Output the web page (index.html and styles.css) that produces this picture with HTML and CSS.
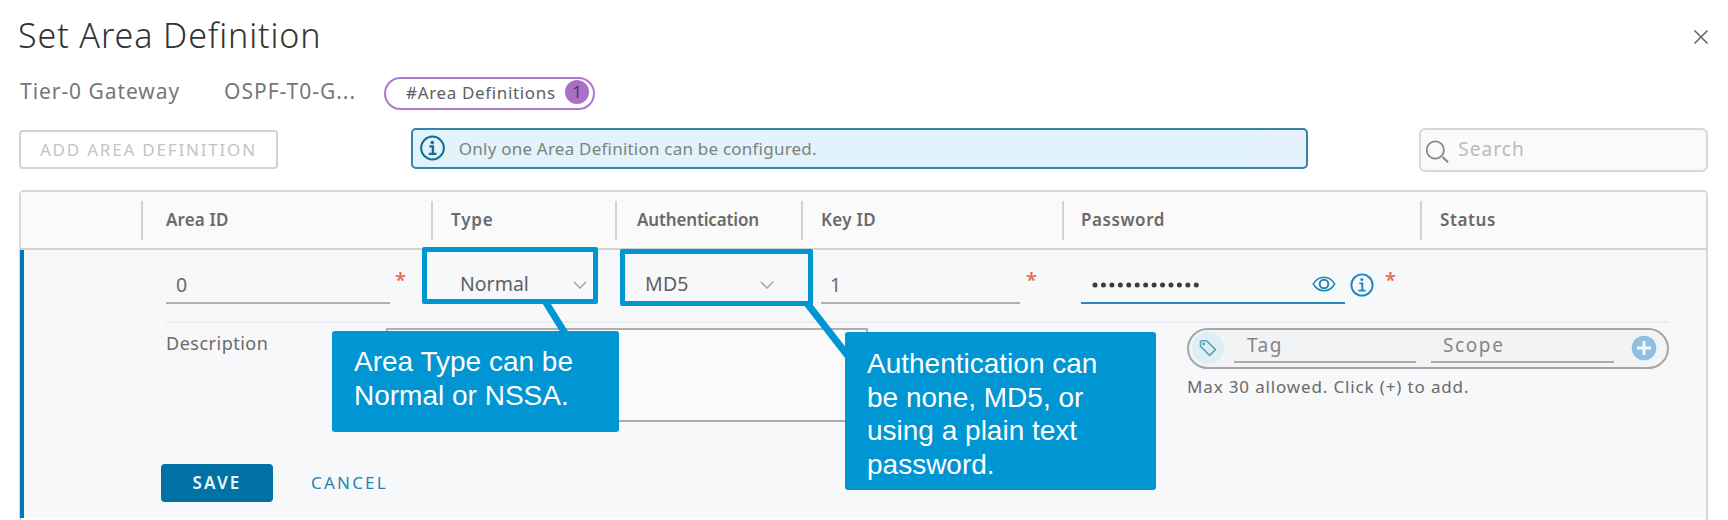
FILE: index.html
```
<!DOCTYPE html>
<html lang="en">
<head>
<meta charset="utf-8">
<title>Set Area Definition</title>
<link rel="stylesheet" href="styles.css">
</head>
<body>
<main class="dialog">
  <header class="dialog-head">
    <h1 class="title">Set Area Definition</h1>
    <svg class="close" viewBox="0 0 16 16" width="16" height="16"><path d="M1.5 1.5l13 13M14.5 1.5l-13 13" stroke="#666" stroke-width="1.6" fill="none"/></svg>
  </header>

  <div class="crumbs">
    <span class="crumb crumb-type">Tier-0 Gateway</span>
    <span class="crumb crumb-name">OSPF-T0-G...</span>
    <span class="pill"><span class="pill-text">#Area Definitions</span><span class="badge">1</span></span>
  </div>

  <div class="toolbar">
    <button class="btn btn-add">ADD AREA DEFINITION</button>
    <div class="alert">
      <svg class="alert-icon" viewBox="0 0 26 26" width="26" height="26" fill="none" stroke="#17708f"><circle cx="12.500" cy="13" r="11.400" stroke-width="2"/><circle cx="12.300" cy="7.600" r="1.800" fill="#17708f" stroke="none"/><path d="M9.300 11.400h3.600v7.400M8.700 18.900h7.800" stroke-width="2.400"/></svg>
      <span class="alert-text">Only one Area Definition can be configured.</span>
    </div>
    <div class="search">
      <svg class="search-icon" viewBox="0 0 24 24" width="24" height="24" fill="none" stroke="#858585"><circle cx="10.3" cy="10" r="8.6" stroke-width="1.7"/><path d="M17.6 17l5.4 5.2" stroke-width="2"/></svg>
      <span class="search-text">Search</span>
    </div>
  </div>

  <section class="table">
    <div class="cols table-head">
      <span class="th th-empty"></span>
      <span class="th th-area">Area ID</span>
      <span class="th th-type">Type</span>
      <span class="th th-auth">Authentication</span>
      <span class="th th-key">Key ID</span>
      <span class="th th-pass">Password</span>
      <span class="th th-status">Status</span>
    </div>
    <div class="edit">
      <div class="cols fields">
        <div></div>
        <div class="cell cell-area"><span class="input input-area">0</span><span class="star">*</span></div>
        <div class="cell cell-type"><span class="select-text">Normal</span><svg class="chev" viewBox="0 0 14 8" width="14" height="8"><path d="M.8.8L7 7 13.200.8" fill="none" stroke="#aaa" stroke-width="1.6"/></svg></div>
        <div class="cell cell-auth"><span class="select-text">MD5</span><svg class="chev" viewBox="0 0 14 8" width="14" height="8"><path d="M.8.8L7 7 13.200.8" fill="none" stroke="#aaa" stroke-width="1.6"/></svg></div>
        <div class="cell cell-key"><span class="input input-key">1</span><span class="star">*</span></div>
        <div class="cell cell-pass">
          <span class="input input-pass">
            <svg class="dots" viewBox="0 0 108 6" width="108" height="6"><path d="M3 3H106" stroke="#3c3c3c" stroke-width="5" stroke-linecap="round" stroke-dasharray="0 8.44" fill="none"/></svg>
            <svg class="eye" viewBox="0 0 24 16" width="24" height="16" fill="none" stroke="#2487b5" stroke-width="1.5"><path d="M1.300 8C4 3.400 7.700 1.200 12 1.200S20 3.400 22.700 8C20 12.600 16.300 14.800 12 14.800S4 12.600 1.300 8z"/><circle cx="12" cy="8" r="4.300" stroke-width="2"/></svg>
          </span>
          <svg class="info" viewBox="0 0 24 24" width="24" height="24" fill="none" stroke="#1f86c4"><circle cx="12" cy="12" r="10.600" stroke-width="1.900"/><circle cx="11.800" cy="6.500" r="1.500" fill="#1f86c4" stroke="none"/><path d="M9.300 10.400h3v7M8.300 17.600h7.400" stroke-width="1.900"/></svg>
          <span class="star">*</span>
        </div>
      </div>
      <div class="details">
        <span class="desc-label">Description</span>
        <div class="textarea"></div>
        <div class="tags">
          <div class="tag-box">
            <span class="tag-icon"><svg viewBox="0 0 18 18" width="18" height="18" fill="none" stroke="#5d9db8" stroke-width="1.500"><path d="M1.500 2.600V7.200L10.700 16.400 16.500 10.600 7.600 1.700H2.500z" stroke-linejoin="round"/><circle cx="4.700" cy="4.900" r=".700"/></svg></span>
            <span class="tag-input tag-name">Tag</span>
            <span class="tag-input tag-scope">Scope</span>
            <svg class="plus" viewBox="0 0 26 26" width="26" height="26"><circle cx="13" cy="13" r="12.300" fill="#90bfe2"/><path d="M13 6v14M6 13h14" stroke="#f4f8fb" stroke-width="3"/></svg>
          </div>
          <div class="hint">Max 30 allowed. Click (+) to add.</div>
        </div>
      </div>
      <div class="actions">
        <button class="btn btn-save">SAVE</button>
        <span class="cancel">CANCEL</span>
      </div>
    </div>
  </section>

  <svg class="leaders" viewBox="0 0 1728 520" width="1728" height="520"><path d="M545 301L568 338M806 302L848 356" stroke="#0095d3" stroke-width="7" fill="none"/></svg>
  <div class="frame frame-type"></div>
  <div class="frame frame-auth"></div>
  <div class="callout callout-type">Area Type can be<br>Normal or NSSA.</div>
  <div class="callout callout-auth">Authentication can<br>be none, MD5, or<br>using a plain text<br>password.</div>
</main>
</body>
</html>
```
FILE: styles.css
```
* { box-sizing: border-box; }
body {
  margin: 0;
  background: #fff;
  font-family: "Noto Sans", "Open Sans", sans-serif;
  color: #6a6a6a;
}
svg { display: block; flex: none; }
.dialog {
  position: relative;
  width: 1728px;
  height: 520px;
  padding: 15px 20px 0 19px;
  overflow: hidden;
  white-space: nowrap;
}

.dialog-head { display: flex; justify-content: space-between; height: 62px; }
.title {
  margin: 0 0 0 -1px;
  font-size: 34px;
  font-weight: 300;
  line-height: 41px;
  letter-spacing: .9px;
  color: #333;
}
.close { margin: 14px -1px 0 0; }

.crumbs { display: flex; height: 33px; margin-bottom: 18px; }
.crumb { font-size: 21px; line-height: 28px; color: #777; }
.crumb-type { width: 205px; padding-left: 1px; letter-spacing: .95px; }
.crumb-name { width: 160px; letter-spacing: 1px; }
.pill {
  display: flex;
  width: 211px;
  height: 33px;
  padding: 0 4px 0 20px;
  border: 2px solid #ad78cc;
  border-radius: 17px;
  justify-content: space-between;
}
.pill-text { font-size: 17px; line-height: 27px; letter-spacing: .65px; color: #606060; }
.badge {
  width: 24px;
  height: 24px;
  margin-top: 1px;
  border-radius: 50%;
  background: #ab6fc8;
  color: #4a3a52;
  font-size: 17px;
  line-height: 24px;
  text-align: center;
}

.toolbar { display: flex; height: 62px; align-items: flex-start; }
.btn { padding: 0; border-radius: 4px; font-family: inherit; font-size: 17px; }
.btn-add {
  width: 259px;
  height: 39px;
  margin: 2px 133px 0 0;
  border: 2px solid #d2d2d2;
  background: #fff;
  color: #c4c4c4;
  line-height: 33px;
  letter-spacing: 1.8px;
}
.alert {
  display: flex;
  width: 898px;
  height: 41px;
  margin-right: 111px;
  padding: 5px 7px;
  border: 2px solid #3b83a3;
  border-radius: 5px;
  background: linear-gradient(90deg, #e1f3fb 92%, #e5f1fe 97%);
}
.alert-text { margin-left: 13px; font-size: 17px; line-height: 28px; letter-spacing: .22px; color: #808080; }
.search {
  display: flex;
  width: 289px;
  height: 44px;
  padding-left: 4px;
  border: 2px solid #d8d8d8;
  border-radius: 6px;
  background: #fafafa;
}
.search-icon { margin: 10px 0 0; }
.search-text { margin-left: 9px; font-size: 19px; line-height: 39px; letter-spacing: 1.1px; color: #bbb; }

.table {
  height: 330px;
  border: 2px solid #d8d8d8;
  border-bottom: 0;
  border-radius: 5px 5px 0 0;
}
.cols { display: grid; grid-template-columns: 120px 290px 184px 186px 261px 358px 1fr; }
.table-head {
  height: 58px;
  padding-top: 9px;
  border-bottom: 2px solid #d2d2d2;
  background: #fafafa;
}
.th {
  height: 39px;
  border-left: 2px solid #d2d2d2;
  font-size: 17px;
  font-weight: 600;
  line-height: 38px;
}
.th-empty { border-left: 0; }
.th-area { padding-left: 23px; letter-spacing: .15px; }
.th-type { padding-left: 18px; letter-spacing: .8px; }
.th-auth { padding-left: 20px; letter-spacing: -.15px; }
.th-key { padding-left: 18px; letter-spacing: .3px; }
.th-pass { padding-left: 17px; letter-spacing: .57px; }
.th-status { padding-left: 18px; letter-spacing: .6px; }

.edit {
  height: 268px;
  margin-left: -1px;
  border-left: 4px solid #0079b8;
  background: #f7f8fa;
}
.fields { height: 71px; margin-left: -3px; }
.cell { display: flex; align-items: flex-start; }
.input { height: 54px; border-bottom: 2px solid #b0b0b0; font-size: 19.500px; line-height: 69px; }
.star { width: 9px; font-size: 20px; font-weight: 600; line-height: 34px; margin-top: 13px; color: #e0705c; height: 34px; }
.cell-area { padding-left: 25px; }
.input-area { width: 224px; padding-left: 10px; }
.input-area + .star { margin-left: 5px; }
.cell-type { padding-left: 29px; }
.cell-auth { padding-left: 30px; }
.select-text { font-size: 19.500px; line-height: 67px; color: #606060; }
.cell-type .select-text { width: 113px; }
.cell-auth .select-text { width: 115px; letter-spacing: .2px; }
.chev { margin-top: 31px; }
.cell-key { padding-left: 20px; }
.input-key { width: 199px; padding-left: 9px; }
.input-key + .star { margin-left: 6px; }
.cell-pass { padding-left: 19px; }
.input-pass { display: flex; width: 264px; border-color: #2489bd; padding-left: 11px; }
.dots { margin-top: 32px; }
.eye { margin: 26px 0 0 112px; }
.info { margin: 23px 0 0 5px; }
.info + .star { margin-left: 11px; }

.details {
  display: flex;
  align-items: flex-start;
  width: 1503px;
  height: 143px;
  margin-left: 142px;
  padding-top: 5px;
  border-top: 2px solid #ebedee;
}
.desc-label { width: 220px; font-size: 18px; line-height: 30px; letter-spacing: .5px; }
.textarea { width: 482px; height: 94px; border: 2px solid #aeaeb0; background: #fafafa; }
.tags { margin-left: 319px; }
.tag-box {
  display: flex;
  width: 482px;
  height: 41px;
  padding: 2px 4px 0 3px;
  border: 2px solid #a4a5a6;
  border-radius: 21px;
  background: #f1f3f4;
}
.tag-icon { display: flex; width: 32px; height: 32px; align-items: center; justify-content: center; border-radius: 50%; background: #deeef6; }
.tag-input { height: 31px; border-bottom: 2px solid #acacac; font-size: 19px; line-height: 26px; color: #858585; }
.tag-name { width: 182px; margin-left: 10px; padding-left: 13px; letter-spacing: 1.500px; }
.tag-scope { width: 183px; margin-left: 15px; padding-left: 12px; letter-spacing: 1.600px; }
.plus { margin: 3px 0 0 17px; }
.hint { font-size: 17px; line-height: 34px; margin-top: 1px; letter-spacing: .85px; }

.actions { display: flex; padding-left: 137px; }
.btn-save { width: 112px; height: 38px; border: 0; background: #0072a3; color: #eef6fa; font-weight: 600; letter-spacing: 2.200px; line-height: 38px; }
.cancel { margin-left: 38px; font-size: 17px; line-height: 38px; letter-spacing: 2.200px; color: #2783b2; }

/* Annotations that sit over the form */
.leaders { position: absolute; left: 0; top: 0; }
.frame { position: absolute; border: 5px solid #0095d3; border-radius: 2px; }
.frame-type { left: 422px; top: 247px; width: 176px; height: 57px; }
.frame-auth { left: 620px; top: 249px; width: 193px; height: 57px; }
.callout {
  position: absolute;
  border-radius: 3px;
  background: #0095d3;
  color: #fff;
  font: 28px/33.600px "Liberation Sans", Arial, sans-serif;
}
.callout-type { left: 332px; top: 331px; width: 287px; height: 101px; padding: 14px 22px; }
.callout-auth { left: 845px; top: 332px; width: 311px; height: 158px; padding: 15px 22px; }
```
